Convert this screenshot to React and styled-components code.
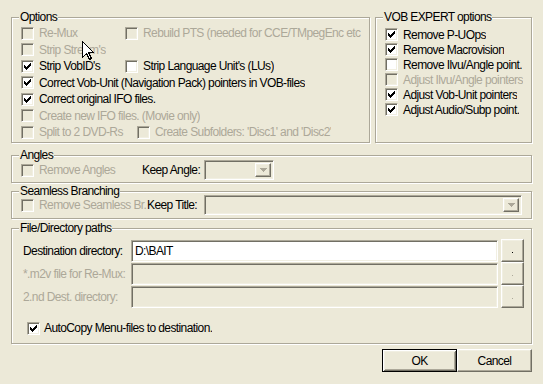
import React from "react";
import styled, { createGlobalStyle, css } from "styled-components";

const BG = "#ECE9D8";
const SHADOW = "#ACA899";
const DARK = "#716F64";
const LIGHT = "#F1EFE2";
const DISABLED = "#ACA899";

const Global = createGlobalStyle`
  html, body {
    margin: 0;
    padding: 0;
    background: ${BG};
    overflow: hidden;
  }
  body {
    font-family: "Liberation Sans", Arial, sans-serif;
    font-size: 12px;
    letter-spacing: -0.6px;
    color: #000;
  }
`;

const sunken = css`
  box-sizing: border-box;
  border: 1px solid;
  border-color: ${SHADOW} #fff #fff ${SHADOW};
  box-shadow: inset 1px 1px 0 ${DARK}, inset -1px -1px 0 ${LIGHT};
`;

const raised = css`
  box-sizing: border-box;
  border: 1px solid;
  border-color: #fff ${DARK} ${DARK} #fff;
  box-shadow: inset -1px -1px 0 ${SHADOW}, inset 1px 1px 0 ${LIGHT};
  background: ${BG};
`;

const Dialog = styled.div`
  position: relative;
  width: 543px;
  height: 384px;
  box-sizing: border-box;
  padding: 17px 11px 0 11px;
  display: flex;
  flex-direction: column;
`;

const TopRow = styled.div`
  display: flex;
  gap: 5px;
`;

const Group = styled.div`
  position: relative;
  box-sizing: border-box;
  width: ${(p) => (p.$w ? `${p.$w}px` : "auto")};
  height: ${(p) => p.$h}px;
  margin-top: ${(p) => p.$mt || 0}px;
  padding: ${(p) => p.$pad};
  border: 1px solid ${SHADOW};
  box-shadow: inset 1px 1px 0 #fff, 1px 1px 0 #fff;
`;

const GroupTitle = styled.span`
  position: absolute;
  top: -8px;
  left: 7px;
  padding: 0 1px;
  line-height: 14px;
  background: ${BG};
  white-space: nowrap;
`;

const Row = styled.div`
  display: flex;
  align-items: center;
  height: ${(p) => p.$h}px;
  margin-top: ${(p) => p.$mt || 0}px;
  margin-left: ${(p) => p.$ml || 0}px;
`;

const CheckLabel = styled.label`
  display: flex;
  align-items: center;
  flex-shrink: 0;
  width: ${(p) => (p.$w ? `${p.$w}px` : "auto")};
  overflow: hidden;
  white-space: nowrap;
  color: ${(p) => (p.$disabled ? DISABLED : "#000")};
`;

const Box = styled.span`
  ${sunken};
  display: block;
  flex-shrink: 0;
  width: 13px;
  height: 13px;
  background: ${(p) => (p.$disabled ? BG : "#fff")};
`;

const CheckText = styled.span`
  margin-left: ${(p) => p.$gap}px;
  line-height: 16px;
`;

const Label = styled.span`
  flex-shrink: 0;
  width: ${(p) => p.$w}px;
  line-height: 16px;
  white-space: nowrap;
  color: ${(p) => (p.$disabled ? DISABLED : "#000")};
`;

const Combo = styled.div`
  ${sunken};
  display: flex;
  justify-content: flex-end;
  align-items: stretch;
  padding: 2px;
  width: ${(p) => p.$w}px;
  height: 20px;
  background: ${BG};
`;

const ComboButton = styled.span`
  ${raised};
  width: 16px;
  display: flex;
  align-items: center;
  justify-content: center;
`;

const Edit = styled.div`
  ${sunken};
  width: 367px;
  height: 22px;
  padding: 3px 3px 0;
  line-height: 15px;
  white-space: nowrap;
  background: ${(p) => (p.$disabled ? BG : "#fff")};
`;

const Browse = styled.span`
  ${raised};
  width: 23px;
  height: 23px;
  margin-left: 3px;
  display: flex;
  align-items: center;
  justify-content: center;
  color: ${(p) => (p.$disabled ? DISABLED : "#000")};
`;

const Dot = styled.span`
  width: 1px;
  height: 1px;
  margin-top: 4px;
  background: currentColor;
`;

const Buttons = styled.div`
  display: flex;
  justify-content: flex-end;
  margin-top: 5px;
`;

const Button = styled.button`
  ${raised};
  width: 75px;
  height: 23px;
  padding: 0;
  font: inherit;
  letter-spacing: inherit;
  color: #000;
  ${(p) =>
    p.$default &&
    css`
      border: 1px solid #000;
      box-shadow: inset 1px 1px 0 #fff, inset -1px -1px 0 ${DARK},
        inset 2px 2px 0 ${LIGHT}, inset -2px -2px 0 ${SHADOW};
    `}
`;

const Cursor = styled.svg`
  position: absolute;
  left: 82px;
  top: 41px;
`;

const Tick = () => (
  <svg width="11" height="11" viewBox="0 0 11 11" shapeRendering="crispEdges" style={{ display: "block" }}>
    <path
      fill="#000"
      d="M2 4h1v3H2zM3 5h1v3H3zM4 6h1v3H4zM5 5h1v3H5zM6 4h1v3H6zM7 3h1v3H7zM8 2h1v3H8z"
    />
  </svg>
);

const Check = ({ checked, disabled, w, gap = 5, children }) => (
  <CheckLabel $w={w} $disabled={disabled}>
    <Box $disabled={disabled}>{checked && <Tick />}</Box>
    <CheckText $gap={gap}>{children}</CheckText>
  </CheckLabel>
);

const Arrow = () => (
  <svg width="7" height="4" viewBox="0 0 7 4" shapeRendering="crispEdges">
    <path fill={DISABLED} d="M0 0h7v1H0zM1 1h5v1H1zM2 2h3v1H2zM3 3h1v1H3z" />
  </svg>
);

const PathRow = ({ label, value, disabled }) => (
  <Row $h={23}>
    <Label $w={108} $disabled={disabled}>
      {label}
    </Label>
    <Edit $disabled={disabled}>{value}</Edit>
    <Browse $disabled={disabled}>
      <Dot />
    </Browse>
  </Row>
);

export default function App() {
  return (
    <>
      <Global />
      <Dialog>
        <TopRow>
          <Group $w={359} $h={126} $pad="7px 0 0 9px">
            <GroupTitle>Options</GroupTitle>
            <Row $h={16.5}>
              <Check disabled w={104}>Re-Mux</Check>
              <Check disabled w={236}>Rebuild PTS (needed for CCE/TMpegEnc etc</Check>
            </Row>
            <Row $h={16.5}>
              <Check disabled>Strip Stream's</Check>
            </Row>
            <Row $h={16.5}>
              <Check checked w={104}>Strip VobID's</Check>
              <Check>Strip Language Unit's (LUs)</Check>
            </Row>
            <Row $h={16.5}>
              <Check checked>Correct Vob-Unit (Navigation Pack) pointers in VOB-files</Check>
            </Row>
            <Row $h={16.5}>
              <Check checked>Correct original IFO files.</Check>
            </Row>
            <Row $h={16.5}>
              <Check disabled>Create new IFO files. (Movie only)</Check>
            </Row>
            <Row $h={16.5}>
              <Check disabled w={116}>Split to 2 DVD-Rs</Check>
              <Check disabled>Create Subfolders: 'Disc1' and 'Disc2'</Check>
            </Row>
          </Group>
          <Group $w={157} $h={126} $pad="9px 0 0 9px">
            <GroupTitle>VOB EXPERT options</GroupTitle>
            <Row $h={15}>
              <Check checked>Remove P-UOps</Check>
            </Row>
            <Row $h={15}>
              <Check checked>Remove Macrovision</Check>
            </Row>
            <Row $h={15}>
              <Check>Remove Ilvu/Angle point.</Check>
            </Row>
            <Row $h={15}>
              <Check disabled>Adjust Ilvu/Angle pointers</Check>
            </Row>
            <Row $h={15}>
              <Check checked>Adjust Vob-Unit pointers</Check>
            </Row>
            <Row $h={15}>
              <Check checked>Adjust Audio/Subp point.</Check>
            </Row>
          </Group>
        </TopRow>

        <Group $h={28} $mt={12} $pad="4px 0 0 9px">
          <GroupTitle>Angles</GroupTitle>
          <Row $h={20}>
            <Check disabled w={121}>Remove Angles</Check>
            <Label $w={62}>Keep Angle:</Label>
            <Combo $w={70}>
              <ComboButton>
                <Arrow />
              </ComboButton>
            </Combo>
          </Row>
        </Group>

        <Group $h={28} $mt={8} $pad="3px 0 0 9px">
          <GroupTitle>Seamless Branching</GroupTitle>
          <Row $h={20}>
            <Check disabled w={126}>Remove Seamless Br.</Check>
            <Label $w={57}>Keep Title:</Label>
            <Combo $w={318}>
              <ComboButton>
                <Arrow />
              </ComboButton>
            </Combo>
          </Row>
        </Group>

        <Group $h={116} $mt={9} $pad="10px 0 0 11px">
          <GroupTitle>File/Directory paths</GroupTitle>
          <PathRow label="Destination directory:" value="D:\BAIT" />
          <PathRow label="*.m2v file for Re-Mux:" disabled />
          <PathRow label="2.nd Dest. directory:" disabled />
          <Row $h={16} $mt={12} $ml={4}>
            <Check checked gap={4}>AutoCopy Menu-files to destination.</Check>
          </Row>
        </Group>

        <Buttons>
          <Button $default>OK</Button>
          <Button>Cancel</Button>
        </Buttons>

        <Cursor width="13" height="20" viewBox="0 0 13 20" shapeRendering="crispEdges">
          <path
            d="M0.5 0.5V16.5L4.5 12.5L7.5 18.5L9.5 17.5L6.5 11.5H11.5Z"
            fill="#fff"
            stroke="#000"
            strokeLinejoin="miter"
          />
        </Cursor>
      </Dialog>
    </>
  );
}
